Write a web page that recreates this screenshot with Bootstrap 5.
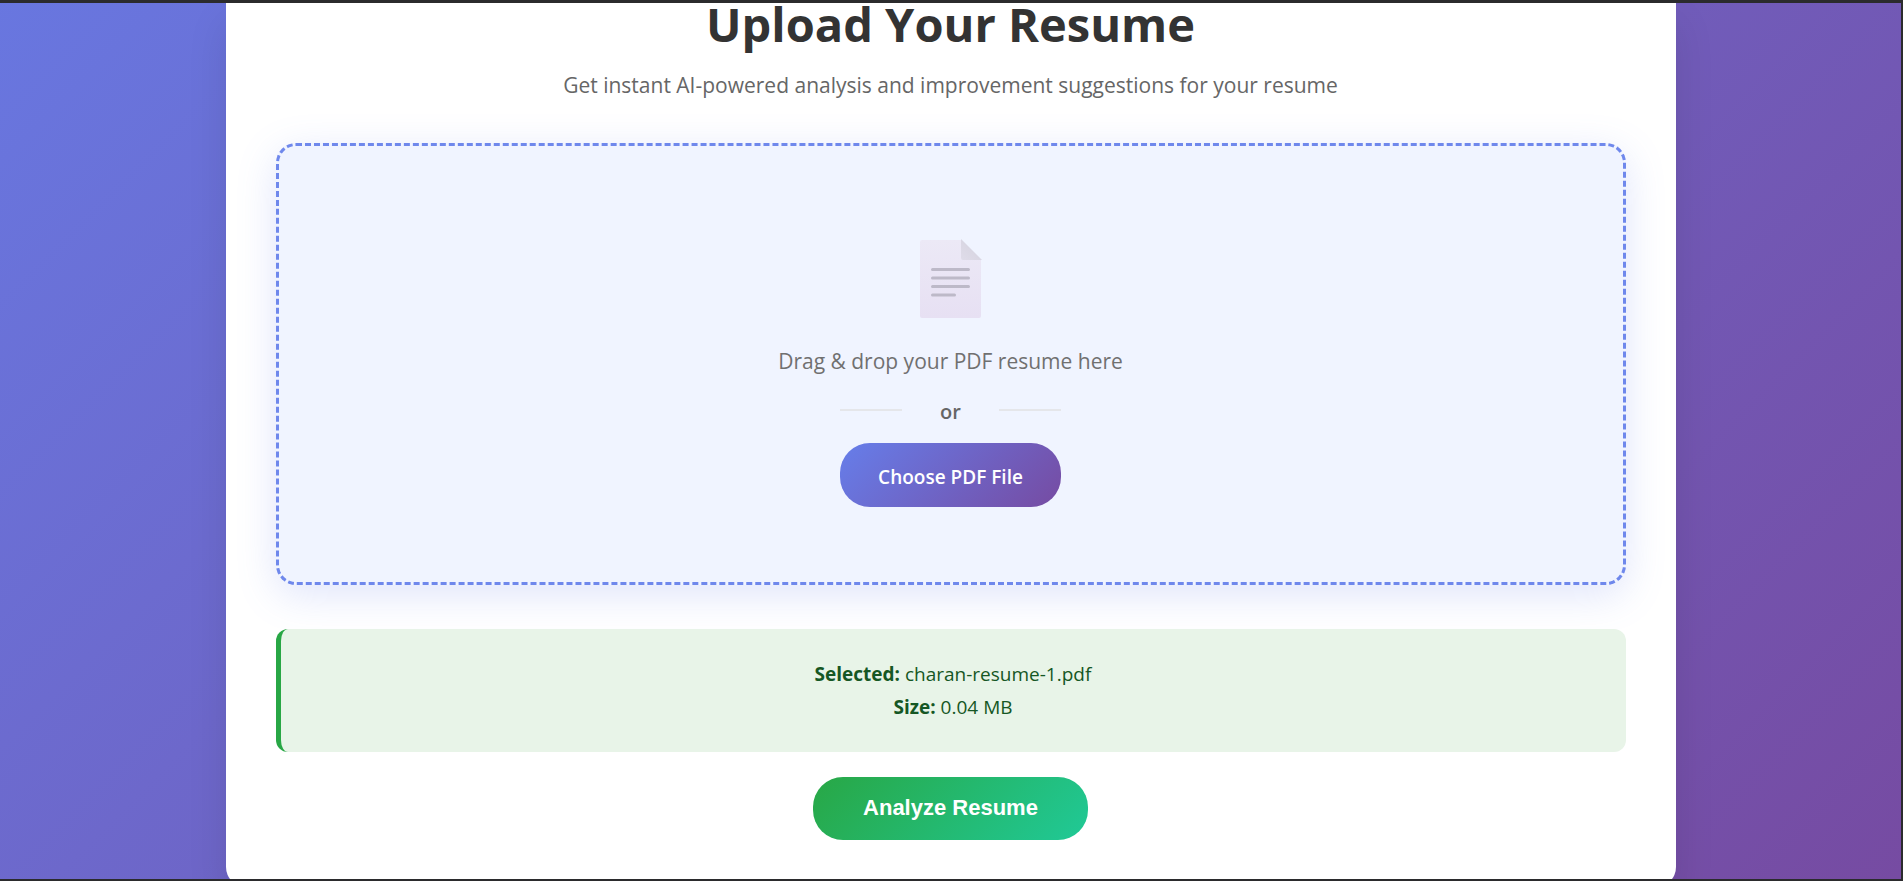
<!DOCTYPE html>
<html lang="en">
<head>
<meta charset="utf-8">
<meta name="viewport" content="width=device-width, initial-scale=1">
<title>Upload Your Resume</title>
<link href="https://cdn.jsdelivr.net/npm/bootstrap@5.3.0/dist/css/bootstrap.min.css" rel="stylesheet">
<style>
  body { font-family: "Open Sans", "Noto Sans", sans-serif; }
  .page-frame {
    border: solid #2b2b2d;
    border-width: 3px 2px 2px 0;
    background: linear-gradient(135deg, #667eea 0%, #764ba2 100%) bottom / 100% 1350px no-repeat;
  }
  .upload-panel {
    max-width: 1450px;
    padding: 0 50px 47px;
    border-radius: 0 0 20px 20px;
    box-shadow: 0 20px 40px rgba(0, 0, 0, .1);
  }
  .panel-title { font-size: 47px; line-height: 42px; font-weight: 700; color: #333; margin: 0 0 22px; }
  .panel-text { font-size: 21px; line-height: 36px; color: #666; margin: 0 0 40px; }
  .drop-zone {
    padding: 93px 20px 75px;
    border: 3px dashed #6f88ec;
    border-radius: 20px;
    background: #f0f4ff;
    box-shadow: 0 10px 40px rgba(102, 126, 234, .2);
  }
  .drop-text { font-size: 21px; line-height: 36px; color: #707070; margin: 24px 0 16px; }
  .or-divider { gap: 38px; font-size: 20px; line-height: 30px; font-weight: 600; color: #666; margin-bottom: 16px; }
  .or-divider span { padding-top: 2px; }
  .or-divider hr { margin: 0 0 2px; border-top: 2px solid #e5e6ea; opacity: 1; }
  .pill { border: 0; border-radius: 30px; color: #fff; font-weight: 600; }
  .pill-choose { font-size: 19px; line-height: 32px; padding: 18px 38px 14px; background: linear-gradient(135deg, #667eea, #764ba2); }
  .pill-analyze { font: 700 22px/31px "Liberation Sans", Arial, sans-serif; padding: 15px 50px 17px; background: linear-gradient(135deg, #28a745, #20c997); }
  .file-info {
    margin: 44px 0 25px;
    padding: 29px 29px 28px;
    border-left: 5px solid #28a745;
    border-radius: 12px;
    background: #e8f4e8;
    color: #155724;
    font-size: 19px;
    line-height: 33px;
  }
</style>
</head>
<body>
<div class="page-frame vh-100 overflow-hidden">
  <main class="upload-panel mx-auto bg-white text-center">
    <h1 class="panel-title">Upload Your Resume</h1>
    <p class="panel-text">Get instant AI-powered analysis and improvement suggestions for your resume</p>
    <section class="drop-zone d-flex flex-column align-items-center">
      <svg width="62" height="80" viewBox="0 0 62 80" aria-hidden="true">
        <defs>
          <linearGradient id="sheet" x1="0" y1="0" x2="0" y2="1"><stop offset="0" stop-color="#ece9f6"/><stop offset="1" stop-color="#e7e0f3"/></linearGradient>
          <linearGradient id="fold" x1="0" y1="1" x2="1" y2="0"><stop offset="0" stop-color="#dfdce9"/><stop offset="1" stop-color="#d3d1dd"/></linearGradient>
        </defs>
        <path d="M2 1H41L61 21V77Q61 79 59 79H2Q0 79 0 77V3Q0 1 2 1Z" fill="url(#sheet)"/>
        <path d="M41 0L62 21H43Q41 21 41 19Z" fill="url(#fold)"/>
        <path d="M12.500 30.500H48.500M12.500 39H48.500M12.500 47.500H48.500M12.500 56H34.500" stroke="#bdb9c8" stroke-width="3" stroke-linecap="round"/>
      </svg>
      <p class="drop-text">Drag &amp; drop your PDF resume here</p>
      <div>
        <div class="or-divider d-flex align-items-center">
          <hr class="flex-fill"><span>or</span><hr class="flex-fill">
        </div>
        <button type="button" class="pill pill-choose">Choose PDF File</button>
      </div>
    </section>
    <div class="file-info">
      <div><strong>Selected:</strong> charan-resume-1.pdf</div>
      <div><strong>Size:</strong> 0.04 MB</div>
    </div>
    <button type="button" class="pill pill-analyze">Analyze Resume</button>
  </main>
</div>
<script src="https://cdn.jsdelivr.net/npm/bootstrap@5.3.0/dist/js/bootstrap.bundle.min.js"></script>
</body>
</html>
